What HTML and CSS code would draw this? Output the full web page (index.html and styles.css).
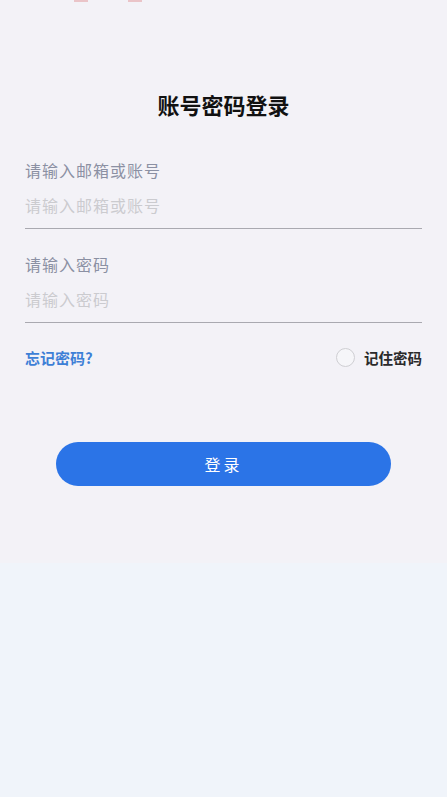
FILE: index.html
```html
<!DOCTYPE html>
<html lang="zh-CN">
<head>
    <meta charset="UTF-8">
    <meta name="viewport" content="width=device-width, initial-scale=1.0">
    <title>账号密码登录</title>
    <link rel="stylesheet" href="styles.css">
</head>
<body>
    <div class="top-marks">
        <span class="mark"></span>
        <span class="mark"></span>
    </div>
    <div class="login-container">
        <h2 class="title">账号密码登录</h2>
        <form id="loginForm">
            <div class="form-group">
                <label for="account">请输入邮箱或账号</label>
                <input type="text" id="account" name="account" placeholder="请输入邮箱或账号">
            </div>
            <div class="form-group">
                <label for="password">请输入密码</label>
                <input type="password" id="password" name="password" placeholder="请输入密码">
            </div>
            <div class="options">
                <a href="#" class="forgot">忘记密码?</a>
                <label class="remember">
                    <span class="radio"></span>
                    记住密码
                </label>
            </div>
            <button type="submit">登录</button>
        </form>
    </div>
</body>
</html>
```

FILE: styles.css
```css
body {
    margin: 0;
    height: 797px;
    background: linear-gradient(to bottom, #f3f2f7 563px, #f0f4fa 563px);
    font-family: "Noto Sans CJK SC", "Noto Sans", sans-serif;
}

.top-marks {
    display: flex;
    height: 3px;
    padding-left: 74px;
    gap: 40px;
}

.mark {
    width: 14px;
    height: 2px;
    background-color: #eac4c8;
}

.login-container {
    padding: 86px 25px 0;
}

.title {
    margin: 0;
    text-align: center;
    font-size: 22px;
    line-height: 30px;
    font-weight: bold;
    color: #111;
}

#loginForm {
    margin-top: 40px;
}

.form-group {
    margin-bottom: 24px;
}

.form-group label {
    display: block;
    font-size: 16px;
    line-height: 22px;
    letter-spacing: 1px;
    color: #8b90a3;
}

.form-group input {
    display: block;
    width: 100%;
    box-sizing: border-box;
    height: 48px;
    padding: 0;
    border: none;
    border-bottom: 1px solid #a9a9b0;
    background: transparent;
    font-family: inherit;
    font-size: 16px;
    letter-spacing: 1px;
    outline: none;
}

.form-group input::placeholder {
    color: #cbcbcf;
}

.options {
    display: flex;
    justify-content: space-between;
    align-items: center;
    height: 24px;
    margin-top: -2px;
}

.forgot {
    font-size: 15px;
    font-weight: bold;
    color: #3d7fd6;
    text-decoration: none;
}

.remember {
    display: flex;
    align-items: center;
    gap: 9px;
    font-size: 14.5px;
    font-weight: bold;
    color: #2a2a2a;
}

.radio {
    width: 17px;
    height: 17px;
    border: 1px solid #cfcfd3;
    border-radius: 50%;
    background-color: #f6f6f9;
}

button {
    display: block;
    width: 335px;
    height: 44px;
    margin: 73px auto 0;
    border: none;
    border-radius: 22px;
    background-color: #2b74e7;
    color: white;
    font-family: inherit;
    font-size: 16px;
    letter-spacing: 3px;
    cursor: pointer;
}
```
